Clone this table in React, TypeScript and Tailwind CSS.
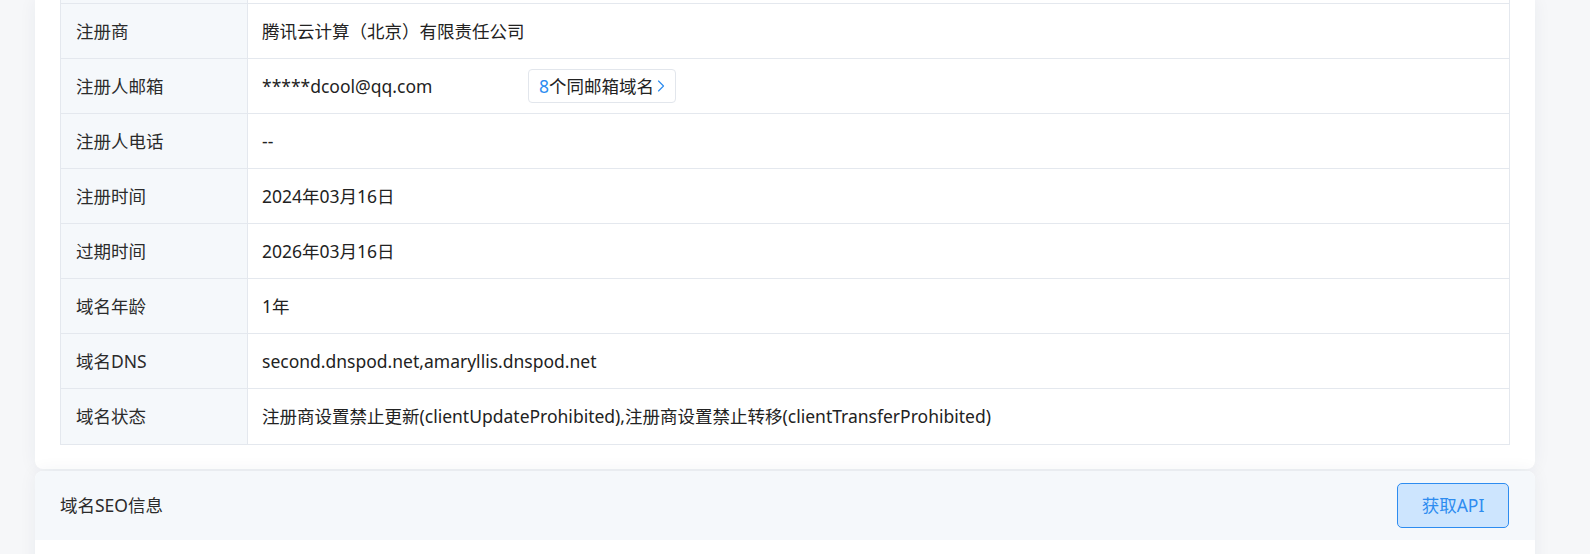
import { ChevronRight } from "lucide-react";

const rows: { label: string; value: string }[] = [
  { label: "注册商", value: "腾讯云计算（北京）有限责任公司" },
  { label: "注册人邮箱", value: "*****dcool@qq.com" },
  { label: "注册人电话", value: "--" },
  { label: "注册时间", value: "2024年03月16日" },
  { label: "过期时间", value: "2026年03月16日" },
  { label: "域名年龄", value: "1年" },
  { label: "域名DNS", value: "second.dnspod.net,amaryllis.dnspod.net" },
  {
    label: "域名状态",
    value:
      "注册商设置禁止更新(clientUpdateProhibited),注册商设置禁止转移(clientTransferProhibited)",
  },
];

const font = { fontFamily: '"Noto Sans", "Noto Sans CJK SC", sans-serif' };

export default function App() {
  return (
    <div className="h-[554px] overflow-hidden bg-[#f6f7f9] text-[#2b2b2b]" style={font}>
      <div className="ml-[35px] w-[1500px]">
        {/* whois card, top cut off */}
        <div className="rounded-b-lg bg-white px-[25px] pb-[24px] shadow-[0_0_18px_rgba(30,50,90,0.06)]">
          <div className="border-x border-b border-[#e4e8ee] w-[1450px]">
            <div className="flex h-[4px] border-b border-[#e4e8ee]">
              <div className="w-[187px] border-r border-[#e4e8ee] bg-[#f5f8fb]" />
              <div className="flex-1" />
            </div>
            {rows.map((r, i) => (
              <div
                key={r.label}
                className={`flex h-[55px] ${i < rows.length - 1 ? "border-b border-[#e4e8ee]" : ""}`}
              >
                <div className="flex w-[187px] items-center border-r border-[#e4e8ee] bg-[#f5f8fb] pl-[15px] text-[17.5px]">
                  {r.label}
                </div>
                <div className="flex flex-1 items-center pl-[14px] text-[17.5px] text-[#222]">
                  {r.label === "注册人邮箱" ? (
                    <>
                      <span className="w-[266px]">{r.value}</span>
                      <button className="flex h-[34px] items-center rounded border border-[#e2e6ec] bg-white pl-[10px] pr-[4px] text-[17.5px] text-[#222]">
                        <span className="text-[#2d8cf0]">8</span>
                        个同邮箱域名
                        <ChevronRight size={20} strokeWidth={1.4} className="-ml-[3px] text-[#2d8cf0]" />
                      </button>
                    </>
                  ) : (
                    r.value
                  )}
                </div>
              </div>
            ))}
          </div>
        </div>

        {/* SEO card */}
        <div className="mt-[2px] h-[200px] rounded-t-lg bg-white shadow-[0_0_18px_rgba(30,50,90,0.06)]">
          <div className="flex h-[69px] items-center justify-between rounded-t-lg bg-[#f5f8fb] pl-[25px] pr-[26px]">
            <span className="text-[17.5px]">域名SEO信息</span>
            <button className="h-[45px] w-[112px] rounded-[5px] border border-[#2d8cf0] bg-[#cde5fe] text-[17.5px] text-[#2d8cf0]">
              获取API
            </button>
          </div>
        </div>
      </div>
    </div>
  );
}
